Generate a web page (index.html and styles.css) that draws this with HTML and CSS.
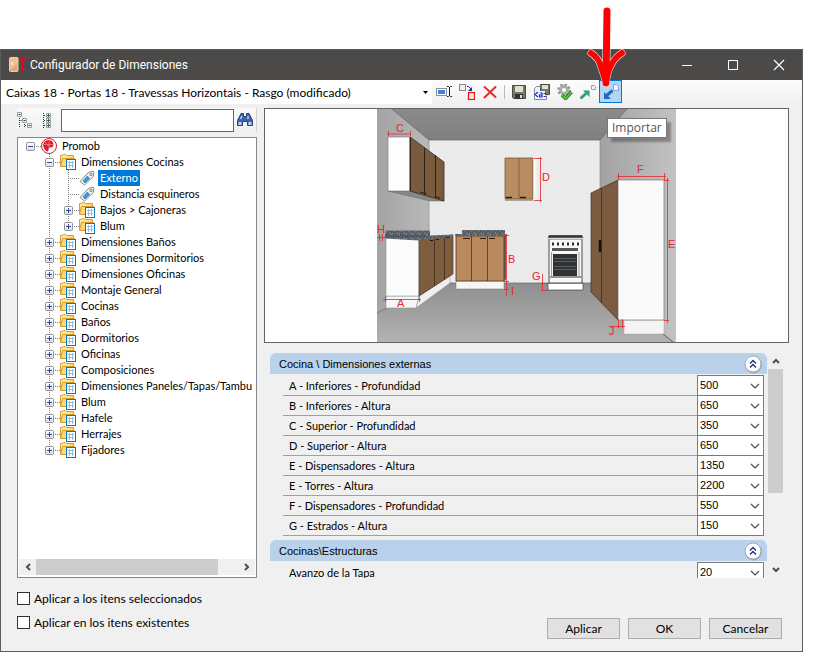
FILE: index.html
```html
<!DOCTYPE html>
<html lang="es">
<head>
  <meta charset="UTF-8" />
  <meta name="viewport" content="width=device-width, initial-scale=1.0" />
  <title>Configurador de Dimensiones</title>
  <link rel="stylesheet" href="styles.css">
</head>
<body>
  <!-- shared icons -->
  <svg class="sprite" aria-hidden="true">
    <defs>
      <linearGradient id="box" x1="0" y1="0" x2="0" y2="1"><stop offset="0" stop-color="#fff"/><stop offset="1" stop-color="#dedede"/></linearGradient>
      <linearGradient id="folder" x1="0" y1="0" x2="1" y2="1"><stop offset="0" stop-color="#fff0b0"/><stop offset="1" stop-color="#f3c652"/></linearGradient>
    </defs>
    <symbol id="plus" viewBox="0 0 9 9">
      <rect x=".5" y=".5" width="8" height="8" rx="1" fill="url(#box)" stroke="#919191"/>
      <path d="M2 4.500h5M4.500 2v5" stroke="#2b4a9b"/>
    </symbol>
    <symbol id="minus" viewBox="0 0 9 9">
      <rect x=".5" y=".5" width="8" height="8" rx="1" fill="url(#box)" stroke="#919191"/>
      <path d="M2 4.500h5" stroke="#2b4a9b"/>
    </symbol>
    <symbol id="carpeta" viewBox="0 0 16 16">
      <path d="M.5 12.500V1.500L5.500.5l1 1h7v3" fill="url(#folder)" stroke="#d99a34"/>
      <path d="M.5 12.500 2.500 4.500h12v8z" fill="#f9d978" stroke="#d99a34"/>
      <rect x="6.500" y="5.500" width="9" height="10" fill="#fff" stroke="#0b78b8"/>
      <path d="M8 8.500h6M8 11.500h6M9.500 8v6M12.500 8v6" stroke="#8fc0e2"/>
      <path d="M9 7.500h1M12 7.500h1" stroke="#f0b83c"/>
    </symbol>
    <symbol id="etiqueta" viewBox="0 0 16 16">
      <path d="M1 11.500 9.500 2.300 14.200 1l1 1-1 4.700L5.500 15z" fill="#f4f4f4" stroke="#8a8a8a"/>
      <path d="M4 10.800 8.300 6l2.400 2.400L6 13z" fill="#2f9cdc" stroke="#1a6fab" stroke-width=".6"/>
      <circle cx="12" cy="4.300" r="1.300" fill="#fff" stroke="#7b7b7b"/>
    </symbol>
    <symbol id="flecha" viewBox="0 0 10 6"><path d="m1 1 4 4 4-4" fill="none" stroke="#4c4c4c" stroke-width="1.200"/></symbol>
    <symbol id="punta" viewBox="0 0 8 6"><path d="m1 5 3-3 3 3" fill="none" stroke="#505050" stroke-width="2"/></symbol>
    <symbol id="plegar" viewBox="0 0 20 20">
      <circle cx="10.500" cy="11" r="8.500" fill="#8796ab" opacity=".6"/>
      <circle cx="10" cy="10" r="8" fill="#fff" stroke="#a0a8b5"/>
      <path d="m7 9.500 3-3 3 3M7 13.500l3-3 3 3" fill="none" stroke="#26377c" stroke-width="1.500"/>
    </symbol>
  </svg>

  <main class="window">
    <header class="titlebar">
      <svg class="app-icon" viewBox="0 0 16 16">
        <rect x=".5" y=".5" width="8.500" height="14" rx="1" fill="#dba97a" stroke="#f0cfa8"/>
        <path d="M1 1h8v5L1 13z" fill="#f1cca4" opacity=".7"/>
        <path d="M3 5v3" stroke="#fff"/>
        <path d="M13.500 2v12M11 1.500h5M11 14.500h5" stroke="#f00018"/>
        <path d="m13.500 2-2 3h4zM13.500 14l-2-3h4z" fill="#f00018"/>
      </svg>
      <h1>Configurador de Dimensiones</h1>
      <button class="caption" aria-label="Minimizar"><svg viewBox="0 0 12 12"><path d="M1 6.500h10" stroke="#fff"/></svg></button>
      <button class="caption" aria-label="Maximizar"><svg viewBox="0 0 12 12"><rect x="1.500" y="1.500" width="9" height="9" fill="none" stroke="#fff"/></svg></button>
      <button class="caption" aria-label="Cerrar"><svg viewBox="0 0 12 12"><path d="m1 1 10 10M11 1 1 11" stroke="#fff" stroke-width="1.200"/></svg></button>
    </header>

    <div class="toolbar">
      <span class="combo">
        <select aria-label="Configuración">
          <option>Caixas 18 - Portas 18 - Travessas Horizontais - Rasgo (modificado)</option>
        </select>
        <svg viewBox="0 0 5 3"><path d="M0 0h5L2.500 3z"/></svg>
      </span>
      <button class="tool" aria-label="Renombrar"><svg viewBox="0 0 16 16">
        <rect x=".5" y="4.500" width="10" height="7" fill="#fff" stroke="#8a8f9c"/><rect x="2" y="6" width="7" height="4" fill="#3f80e0"/>
        <path d="M11 2.500h1.500l1 1 1-1H16M13.500 3v9M11 12.500h1.500l1-1 1 1H16" fill="none" stroke="#222"/></svg></button>
      <button class="tool" aria-label="Duplicar"><svg viewBox="0 0 16 16">
        <rect x=".5" y=".5" width="6" height="6" fill="#f4efef" stroke="#8c8484"/>
        <rect x="9.500" y="8.500" width="6" height="7" fill="#f6e8e8" stroke="#e81010" stroke-width="1.200"/>
        <path d="M8 2.500h1.500L12 5" fill="none" stroke="#143a9c"/><path d="M13 3v4H9z" fill="#143a9c"/></svg></button>
      <button class="tool" aria-label="Eliminar"><svg viewBox="0 0 16 16"><path d="M2.500 3 13.500 13M13.500 3 2.500 13.500" stroke="#f02828" stroke-width="2" stroke-linecap="round"/></svg></button>
      <span class="sep"></span>
      <button class="tool" aria-label="Guardar"><svg viewBox="0 0 16 16">
        <path d="M1.500 1.500h13v13h-12l-1-1z" fill="#77776a" stroke="#4a4a40"/><rect x="4" y="2" width="8" height="6" fill="#dce2d2"/>
        <rect x="4" y="10" width="8" height="5" fill="#333"/><rect x="9" y="11" width="2" height="3" fill="#ddd"/></svg></button>
      <button class="tool" aria-label="Guardar como"><svg viewBox="0 0 16 16">
        <path d="M6.500.5h9v10h-9z" fill="#77776a" stroke="#4a4a40"/><rect x="8" y="1" width="6" height="4" fill="#dce2d2"/>
        <path d="M.5 15.500v-11l2-2h4M.5 15.500h12v-4" fill="#eef1fa" stroke="#7d8796"/>
        <path d="M1 7h10v7H1z" fill="#f4f6ff"/><path d="m4 8-3 2.500L4 13M6 9h2v4H5.500v-2H8M9.500 9.500H12M9.500 12.500H12" fill="none" stroke="#1630e0" stroke-width="1.200"/></svg></button>
      <button class="tool" aria-label="Validar"><svg viewBox="0 0 16 16">
        <circle cx="7" cy="6" r="5.500" fill="none" stroke="#8b8b8b" stroke-width="2.400" stroke-dasharray="2.300 2"/>
        <circle cx="7" cy="6" r="3.500" fill="none" stroke="#ababab" stroke-width="3"/><circle cx="7" cy="6" r="1.500" fill="#fff"/>
        <path d="m5 11 3.500 3.500L14.500 8" fill="none" stroke="#176f16" stroke-width="3.400"/><path d="m5 11 3.500 3.500L14.500 8" fill="none" stroke="#59d03a" stroke-width="1.800"/></svg></button>
      <button class="tool" aria-label="Exportar"><svg viewBox="0 0 16 16">
        <path d="M.5 14.500 6 9.500" stroke="#2c9f78" stroke-width="3"/><path d="M3 6.500h6.500V13z" fill="#2c9f78"/>
        <path d="M11.500 1.500h3l1 1v3h-4z" fill="#edf4ff" stroke="#7ba7dc"/></svg></button>
      <button class="tool active" aria-label="Importar" aria-describedby="tip"><svg viewBox="0 0 16 16">
        <path d="m3 12 6.500-5.500" stroke="#2268c4" stroke-width="3"/><path d="M1 8v7h7z" fill="#2268c4"/>
        <path d="M10.500.5h3l2 2v4h-5z" fill="#edf4ff" stroke="#7ba7dc"/></svg>
        <span class="tooltip" id="tip" role="tooltip">Importar</span></button>
    </div>

    <div class="content">
      <section class="left">
        <div class="search">
          <button class="tool" aria-label="Contraer todo"><svg viewBox="0 0 16 16">
            <path d="M2.500 4v11M2.500 8.500H6M7.500 10v5M8 13.500h4" fill="none" stroke="#333" stroke-dasharray="1 1"/>
            <path d="M.5.500h4v4h-4zM5.500 6.500h4v4h-4zM10.500 11.500h4v4h-4z" fill="#f5f8f8" stroke="#91a5a5"/><path d="M1.500 2.500h2M6.500 8.500h2M11.500 13.500h2" stroke="#333"/></svg></button>
          <button class="tool" aria-label="Expandir todo"><svg viewBox="0 0 16 16">
            <path d="M4.500 1v15M5 3.500h3M5 8.500h3M5 13.500h3" stroke="#333" stroke-dasharray="1 1"/>
            <path d="M7.500 1.500h4v4h-4zM7.500 6.500h4v4h-4zM7.500 11.500h4v4h-4z" fill="#f5f8f8" stroke="#91a5a5"/>
            <path d="M8 3.500h3M8 8.500h3M8 13.500h3M9.500 2v3M9.500 7v3M9.500 12v3" stroke="#555"/></svg></button>
          <input type="text" aria-label="Buscar">
          <button class="tool" aria-label="Buscar"><svg viewBox="0 0 16 16">
            <path d="M4 1.500h2.500v3h3v-3H12l3.500 7v5h-5v-4h-5v4h-5v-5z" fill="#3c64aa" stroke="#24427f"/>
            <path d="M3.500 7 5 4M11 7V4" stroke="#b9d0f5" stroke-width="1.500"/><path d="M1.500 10h3v3h-3zM11.500 10h3v3h-3z" fill="#c4d6f3"/></svg></button>
        </div>

        <div class="tree">
          <ul class="root">
            <li>
              <div class="row"><button class="toggle" aria-label="Contraer"><svg><use href="#minus"/></svg></button>
                <svg class="icon" viewBox="0 0 16 16"><circle cx="8" cy="8" r="7.500" fill="#fff" stroke="#d4202c"/><path d="M8 2C3 2 1.500 6 2.500 9c1 3 3 4.500 4.500 4.500L8 10l3.500-1C14 6 11.500 2 8 2z" fill="#d91f2d"/><path d="M8 2.500v7M3 6.500h9M4 4l5 6" stroke="#f6b0b5" stroke-width=".5"/></svg>
                <span>Promob</span></div>
              <ul>
                <li>
                  <div class="row"><button class="toggle" aria-label="Contraer"><svg><use href="#minus"/></svg></button><svg class="icon"><use href="#carpeta"/></svg><span>Dimensiones Cocinas</span></div>
                  <ul>
                    <li><div class="row"><i class="toggle"></i><svg class="icon"><use href="#etiqueta"/></svg><span class="selected">Externo</span></div></li>
                    <li><div class="row"><i class="toggle"></i><svg class="icon"><use href="#etiqueta"/></svg><span>Distancia esquineros</span></div></li>
                    <li><div class="row"><button class="toggle" aria-label="Expandir"><svg><use href="#plus"/></svg></button><svg class="icon"><use href="#carpeta"/></svg><span>Bajos &gt; Cajoneras</span></div></li>
                    <li><div class="row"><button class="toggle" aria-label="Expandir"><svg><use href="#plus"/></svg></button><svg class="icon"><use href="#carpeta"/></svg><span>Blum</span></div></li>
                  </ul>
                </li>
                <li><div class="row"><button class="toggle" aria-label="Expandir"><svg><use href="#plus"/></svg></button><svg class="icon"><use href="#carpeta"/></svg><span>Dimensiones Baños</span></div></li>
                <li><div class="row"><button class="toggle" aria-label="Expandir"><svg><use href="#plus"/></svg></button><svg class="icon"><use href="#carpeta"/></svg><span>Dimensiones Dormitorios</span></div></li>
                <li><div class="row"><button class="toggle" aria-label="Expandir"><svg><use href="#plus"/></svg></button><svg class="icon"><use href="#carpeta"/></svg><span>Dimensiones Oficinas</span></div></li>
                <li><div class="row"><button class="toggle" aria-label="Expandir"><svg><use href="#plus"/></svg></button><svg class="icon"><use href="#carpeta"/></svg><span>Montaje General</span></div></li>
                <li><div class="row"><button class="toggle" aria-label="Expandir"><svg><use href="#plus"/></svg></button><svg class="icon"><use href="#carpeta"/></svg><span>Cocinas</span></div></li>
                <li><div class="row"><button class="toggle" aria-label="Expandir"><svg><use href="#plus"/></svg></button><svg class="icon"><use href="#carpeta"/></svg><span>Baños</span></div></li>
                <li><div class="row"><button class="toggle" aria-label="Expandir"><svg><use href="#plus"/></svg></button><svg class="icon"><use href="#carpeta"/></svg><span>Dormitorios</span></div></li>
                <li><div class="row"><button class="toggle" aria-label="Expandir"><svg><use href="#plus"/></svg></button><svg class="icon"><use href="#carpeta"/></svg><span>Oficinas</span></div></li>
                <li><div class="row"><button class="toggle" aria-label="Expandir"><svg><use href="#plus"/></svg></button><svg class="icon"><use href="#carpeta"/></svg><span>Composiciones</span></div></li>
                <li><div class="row"><button class="toggle" aria-label="Expandir"><svg><use href="#plus"/></svg></button><svg class="icon"><use href="#carpeta"/></svg><span>Dimensiones Paneles/Tapas/Tambu</span></div></li>
                <li><div class="row"><button class="toggle" aria-label="Expandir"><svg><use href="#plus"/></svg></button><svg class="icon"><use href="#carpeta"/></svg><span>Blum</span></div></li>
                <li><div class="row"><button class="toggle" aria-label="Expandir"><svg><use href="#plus"/></svg></button><svg class="icon"><use href="#carpeta"/></svg><span>Hafele</span></div></li>
                <li><div class="row"><button class="toggle" aria-label="Expandir"><svg><use href="#plus"/></svg></button><svg class="icon"><use href="#carpeta"/></svg><span>Herrajes</span></div></li>
                <li><div class="row"><button class="toggle" aria-label="Expandir"><svg><use href="#plus"/></svg></button><svg class="icon"><use href="#carpeta"/></svg><span>Fijadores</span></div></li>
              </ul>
            </li>
          </ul>
          <div class="hscroll">
            <button aria-label="Izquierda"><svg class="to-left"><use href="#punta"/></svg></button>
            <div class="track"><div class="thumb"></div></div>
            <button aria-label="Derecha"><svg class="to-right"><use href="#punta"/></svg></button>
          </div>
        </div>
      </section>

      <section class="right">
        <div class="preview">
          <svg class="scene" viewBox="0 0 299 233" role="img" aria-label="Cocina con cotas">
            <defs>
              <linearGradient id="wl"><stop offset="0" stop-color="#a3a3a3"/><stop offset="1" stop-color="#b9b9b9"/></linearGradient>
              <linearGradient id="wr"><stop offset="0" stop-color="#a2a2a2"/><stop offset="1" stop-color="#c2c2c2"/></linearGradient>
              <linearGradient id="fl" x2="0" y2="1"><stop offset="0" stop-color="#8f8f8f"/><stop offset="1" stop-color="#b2b2b2"/></linearGradient>
              <linearGradient id="ce" x2="0" y2="1"><stop offset="0" stop-color="#8b8b8b"/><stop offset="1" stop-color="#7c7c7c"/></linearGradient>
              <pattern id="gr" width="7" height="5" patternUnits="userSpaceOnUse"><rect width="7" height="5" fill="#59616a"/><path d="M0 1h2M3 2h2M5 4h2M1 4h1" stroke="#8d949b"/><path d="M2 1h2M0 3h2M4 3h2" stroke="#454c54"/></pattern>
            </defs>
            <!-- room -->
            <path d="M0 0h299v40H0z" fill="url(#ce)"/>
            <path d="M0 0h15l37 31v144L0 204z" fill="url(#wl)"/>
            <path d="M52 31h171v144H52z" fill="#ebebeb"/>
            <path d="M223 31 250 0h49v233h-3l-73-59z" fill="url(#wr)"/>
            <path d="M0 204 52 174h171l73 59H0z" fill="url(#fl)"/>
            <path d="m15 0 37 31h171l27-31M0 204l10-5M52 174h171l73 59" fill="none" stroke="#666" stroke-width=".7"/>
            <path d="M52 31v90M223 31v144" stroke="#8e8e8e" stroke-width=".7"/>
            <!-- wall unit, left -->
            <path d="M11 82h22l34 10H53z" fill="#858886" stroke="#666" stroke-width=".5"/>
            <path d="M11 28h22v54H11z" fill="#fdfdfd" stroke="#777" stroke-width=".6"/>
            <path d="m33 28 34 25v39L33 82z" fill="#795b3e" stroke="#3a2a1b" stroke-width=".8"/>
            <path d="M33.500 28v54M47.500 39v47M58.500 46v43" stroke="#2e231a"/>
            <path d="m43 83 7 2M59 88l4 1" stroke="#222" stroke-width="1.200"/>
            <!-- wall unit, centre -->
            <path d="M128 49h28v41h-28z" fill="#b98c62" stroke="#6b4a2c" stroke-width=".7"/>
            <path d="M142 49v41" stroke="#7e6148"/>
            <path d="M156.500 49h3v42h-3z" fill="#f6f6f6"/>
            <path d="M128 91h28" stroke="#8c8c8c" stroke-width="1.500"/>
            <path d="M129 88.500h6M143 88.500h6" stroke="#2c1c12" stroke-width="1.500"/>
            <!-- base unit, left -->
            <path d="M42 187 73 167v7l-34 25z" fill="#f0efee" stroke="#888" stroke-width=".5"/>
            <path d="M9 187h33l-3 12H9z" fill="#f7f5f5" stroke="#888" stroke-width=".5"/>
            <path d="M9 129h33v58H9z" fill="#fcfbfb" stroke="#888" stroke-width=".5"/>
            <path d="m42 130 34-4v39l-34 22z" fill="#7e5d3e" stroke="#402c1b" stroke-width=".6"/>
            <path d="M57.500 129v48M67.500 128v43" stroke="#3a281a" stroke-width=".8"/>
            <path d="M53 131.500h3M59 130.500h3M69 128.500h3" stroke="#1d1510"/>
            <path d="M9 121.500h44v5l23-1v2l-34 4-34-2v-3z" fill="url(#gr)"/>
            <path d="M8 127h40" stroke="#2f353b" stroke-width=".5"/>
            <!-- base unit, centre -->
            <path d="M127 127h2v43l-2 3z" fill="#5c6268"/>
            <path d="M79 172h48v8H79z" fill="#f6f6f6" stroke="#777" stroke-width=".5"/>
            <path d="M79 127h48v45H79z" fill="#b98a5f" stroke="#4e3520" stroke-width=".8"/>
            <path d="M94.500 127v45M110.500 127v45" stroke="#4a3524" stroke-width=".8"/>
            <path d="M86 129.500h7M103 129.500h6M112 129.500h6" stroke="#2c1c12"/>
            <path d="M85 121h43v4h1v2H78v-2h7z" fill="url(#gr)"/>
            <!-- stove -->
            <path d="M171 174h35v7h-35z" fill="#fff" stroke="#444" stroke-width=".7"/>
            <path d="M172 130h33v44h-33z" fill="#f7f7f7" stroke="#222" stroke-width=".8"/>
            <path d="M172 126.500h33l1 3h-35z" fill="#333" stroke="#111" stroke-width=".5"/>
            <path d="M171 129.500h35" stroke="#ddd" stroke-width="1.500"/>
            <path d="M175 135h28" stroke="#2c2c2c" stroke-width="3" stroke-dasharray="2 3"/>
            <path d="M175 139h26v3h-26z" fill="#555"/><path d="M174.500 143v24M202 143v24" stroke="#999"/>
            <path d="M176 145h24v22h-24z" fill="#2f3133"/>
            <path d="M177 149.500h22M177 152.500h22M177 157.500h22M177 160.500h22" stroke="#6c7074" stroke-width=".7"/>
            <path d="M173 168h31" stroke="#333"/>
            <!-- tower -->
            <path d="M247 211h40v14h-40z" fill="#f5f3f3" stroke="#aaa" stroke-width=".5"/>
            <path d="m214 84 27-13v140l-27-28z" fill="#7b5c40" stroke="#433122" stroke-width=".7"/>
            <path d="M224.500 79v115" stroke="#3b2b1e" stroke-width=".8"/>
            <path d="M223 131v12" stroke="#15100c" stroke-width="2.500"/>
            <path d="M241 71h46v140h-46z" fill="#fbfafa" stroke="#777" stroke-width=".7"/>
            <path d="m286 225 10 8" stroke="#555" stroke-width=".6"/>
            <!-- dimension lines -->
            <path class="dim" d="M10 25h24M11.500 22v5M33.500 22v5M157 49.500h8M157 91.500h8M163.500 48v45M6 190.500h38M8.500 187v6M42.500 187v6M0 128.500h8M2.500 125v7M5.500 125v7M127 126.500h5M127 172.500h5M127 180.500h5M129.500 125v62M165.500 165v17M164 174.500h7M164 181.500h7M240 67.500h49M241.500 64v7M287.500 64v7M290.500 69v145M287 71.500h5M287 211.500h5M241.500 210v9M245.500 210v9M232 217.500h16"/>
            <g class="dim-text">
              <text x="19" y="23">C</text><text x="165" y="72">D</text><text x="0" y="124">H</text>
              <text x="20" y="198">A</text><text x="131" y="154">B</text><text x="134" y="186">I</text>
              <text x="155" y="171">G</text><text x="260" y="64">F</text><text x="291" y="139">E</text><text x="232" y="226">J</text>
            </g>
          </svg>
        </div>

        <div class="settings">
          <div class="groups">
            <section class="group">
              <h2>Cocina \ Dimensiones externas<button aria-label="Plegar"><svg><use href="#plegar"/></svg></button></h2>
              <div class="field"><label for="f1">A - Inferiores - Profundidad</label><span class="pick"><select id="f1"><option>500</option></select><svg><use href="#flecha"/></svg></span></div>
              <div class="field"><label for="f2">B - Inferiores - Altura</label><span class="pick"><select id="f2"><option>650</option></select><svg><use href="#flecha"/></svg></span></div>
              <div class="field"><label for="f3">C - Superior - Profundidad</label><span class="pick"><select id="f3"><option>350</option></select><svg><use href="#flecha"/></svg></span></div>
              <div class="field"><label for="f4">D - Superior - Altura</label><span class="pick"><select id="f4"><option>650</option></select><svg><use href="#flecha"/></svg></span></div>
              <div class="field"><label for="f5">E - Dispensadores - Altura</label><span class="pick"><select id="f5"><option>1350</option></select><svg><use href="#flecha"/></svg></span></div>
              <div class="field"><label for="f6">E - Torres - Altura</label><span class="pick"><select id="f6"><option>2200</option></select><svg><use href="#flecha"/></svg></span></div>
              <div class="field"><label for="f7">F - Dispensadores - Profundidad</label><span class="pick"><select id="f7"><option>550</option></select><svg><use href="#flecha"/></svg></span></div>
              <div class="field"><label for="f8">G - Estrados - Altura</label><span class="pick"><select id="f8"><option>150</option></select><svg><use href="#flecha"/></svg></span></div>
            </section>
            <section class="group">
              <h2>Cocinas\Estructuras<button aria-label="Plegar"><svg><use href="#plegar"/></svg></button></h2>
              <div class="field"><label for="f9">Avanzo de la Tapa</label><span class="pick"><select id="f9"><option>20</option></select><svg><use href="#flecha"/></svg></span></div>
            </section>
          </div>
          <div class="vscroll">
            <button aria-label="Subir"><svg><use href="#punta"/></svg></button>
            <div class="track"><div class="thumb"></div></div>
            <button aria-label="Bajar"><svg class="to-down"><use href="#punta"/></svg></button>
          </div>
        </div>
      </section>
    </div>

    <footer class="footer">
      <div class="checks">
        <label><input type="checkbox"> Aplicar a los itens seleccionados</label>
        <label><input type="checkbox"> Aplicar en los itens existentes</label>
      </div>
      <div class="buttons">
        <button>Aplicar</button>
        <button>OK</button>
        <button>Cancelar</button>
      </div>
    </footer>
  </main>

  <!-- pointer to the import button -->
  <svg class="pointer" viewBox="0 0 42 84" aria-hidden="true">
    <path d="M21 6 20 78" fill="none" stroke="#fff" stroke-width="8" stroke-linecap="round"/>
    <path d="M5 48q8 5 10 14l5 15q3-21 16-29" fill="none" stroke="#fff" stroke-width="7" stroke-linecap="round" stroke-linejoin="round"/>
    <path d="M21 6 20 78" stroke="#f00" stroke-width="7" stroke-linecap="round"/>
    <path d="M5 48q8 5 10 14l5 15q3-21 16-29" fill="none" stroke="#f00" stroke-width="6" stroke-linecap="round" stroke-linejoin="round"/>
    <path d="m13 58 7 20 8-20z" fill="#f00"/>
  </svg>
</body>
</html>
```

FILE: styles.css
```css
* {
  box-sizing: border-box;
}
body {
  margin: 0;
  background: #fff;
  color: #000;
  font-family: "Liberation Sans", Arial, sans-serif;
  font-size: 11px;
}
button, input, select {
  font: inherit;
  color: inherit;
  margin: 0;
  padding: 0;
  border: none;
  border-radius: 0;
  background: none;
}
svg {
  display: block;
}
.sprite {
  position: absolute;
  width: 0;
  height: 0;
}
.window {
  display: flex;
  flex-direction: column;
  height: calc(100vh - 54px);
  min-height: 480px;
  margin: 49px 12px 5px 0;
  border: 1px solid #5c5c5a;
  background: #f0f0f0;
}

/* title bar */
.titlebar {
  display: flex;
  align-items: center;
  height: 30px;
  padding-left: 8px;
  background: #4c4a48;
  color: #fff;
}
.app-icon {
  width: 16px;
  height: 16px;
}
.titlebar h1 {
  flex: 1;
  margin: 0 0 0 5px;
  font: 12px Roboto, sans-serif;
}
.caption {
  display: grid;
  place-items: center;
  width: 46px;
  height: 30px;
}
.caption svg {
  width: 12px;
  height: 12px;
}

/* toolbar */
.toolbar {
  display: flex;
  height: 24px;
  background: linear-gradient(#fdfdfd, #f0f0f0);
}
.combo {
  display: grid;
  align-items: center;
  width: 431px;
  background: #fff;
}
.combo select, .combo svg {
  grid-area: 1 / 1;
}
.combo select {
  appearance: none;
  height: 24px;
  padding-left: 5px;
  font: 12px Lato, sans-serif;
}
.combo svg {
  justify-self: end;
  width: 5px;
  height: 3px;
  margin-right: 4px;
  pointer-events: none;
}
.tool {
  display: grid;
  place-items: center;
  position: relative;
  width: 23px;
  height: 23px;
}
.tool svg {
  width: 16px;
  height: 16px;
}
.sep {
  width: 1px;
  height: 14px;
  margin: 5px 2px 0 3px;
  background: #bdbdbd;
}
.tool.active {
  border: 1px solid #0078d7;
  background: #b3d7f3;
}
.tooltip {
  position: absolute;
  top: 37px;
  left: 7px;
  z-index: 2;
  height: 20px;
  padding: 0 4px;
  border: 1px solid #767676;
  background: #fff;
  box-shadow: 4px 4px 2px rgba(0, 0, 0, 0.3);
  color: #575757;
  font: 12px/18px "Open Sans", "Noto Sans", sans-serif;
}

/* main area */
.content {
  display: grid;
  grid-template-columns: 240px 1fr;
  grid-template-rows: minmax(0, 1fr);
  gap: 7px;
  flex: 1;
  min-height: 0;
  padding: 4px 13px 0 16px;
}
.left, .right {
  display: flex;
  flex-direction: column;
  min-width: 0;
  min-height: 0;
}
.search {
  display: flex;
  height: 24px;
  margin-bottom: 5px;
  border-right: 1px solid #d0d0d0;
  background: linear-gradient(#fafafa, #f0f0f0);
}
.search .tool {
  width: 22px;
}
.search .tool:first-child {
  width: 16px;
  margin-right: 3px;
}
.search input {
  flex: 1;
  min-width: 0;
  height: 23px;
  margin: 1px 0 0 3px;
  padding: 0 4px;
  border: 1px solid #646464;
  background: #fff;
}

/* tree */
.tree {
  display: flex;
  flex-direction: column;
  flex: 1;
  min-height: 0;
  padding: 0 1px 2px;
  border: 1px solid #828790;
  background: #fff;
  font-family: Lato, sans-serif;
}
.tree ul {
  margin: 0;
  padding: 0 0 0 19px;
  list-style: none;
}
.tree .root {
  flex: 1;
  overflow: hidden;
  padding-left: 7px;
}
.tree li {
  background: repeating-linear-gradient(#808080 0 1px, transparent 1px 2px) 4px 0 / 1px 100% no-repeat;
}
.tree li:last-child {
  background-size: 1px 8px;
}
.tree .root > li {
  background: none;
}
.row {
  display: flex;
  align-items: center;
  height: 16px;
  background: repeating-linear-gradient(90deg, #808080 0 1px, transparent 1px 2px) 4px 8px / 11px 1px no-repeat;
  white-space: nowrap;
}
.toggle, .toggle svg {
  flex: none;
  width: 9px;
  height: 9px;
}
.icon {
  flex: none;
  width: 16px;
  height: 16px;
  margin: 0 3px 0 6px;
}
.row span {
  padding: 0 2px;
  line-height: 16px;
}
.row .selected {
  background: #0078d7;
  color: #fff;
}

/* scroll bars */
.hscroll {
  display: flex;
  height: 16px;
  background: #f0f0f0;
}
.hscroll button, .vscroll button {
  display: grid;
  place-items: center;
  flex: none;
  width: 17px;
  height: 16px;
}
.hscroll button svg, .vscroll button svg {
  width: 8px;
  height: 6px;
}
.to-left {
  transform: rotate(-90deg);
}
.to-right {
  transform: rotate(90deg);
}
.to-down {
  transform: rotate(180deg);
}
.track {
  flex: 1;
}
.thumb {
  background: #cdcdcd;
}
.hscroll .thumb {
  width: 90%;
  height: 16px;
}
.vscroll {
  display: flex;
  flex-direction: column;
  width: 15px;
}
.vscroll button {
  width: 15px;
}
.vscroll .thumb {
  height: 64%;
}

/* preview */
.preview {
  flex: none;
  border: 1px solid #646464;
  background: #fff;
}
.scene {
  width: 299px;
  height: 233px;
  margin: 0 auto;
}
.dim {
  fill: none;
  stroke: #e8262c;
  stroke-width: 0.8;
}
.dim-text {
  fill: #e8262c;
  font-size: 11px;
}

/* settings */
.settings {
  display: flex;
  gap: 1px;
  flex: 1;
  min-height: 0;
  margin-top: 10px;
  padding: 0 6px;
}
.groups {
  flex: 1;
  overflow: hidden;
}
.group {
  margin-bottom: 5px;
}
.group h2 {
  display: flex;
  align-items: center;
  justify-content: space-between;
  height: 21px;
  margin: 0 0 1px;
  padding: 0 4px 0 9px;
  border-radius: 6px 6px 0 0;
  background: #b9d1ea;
  font-size: 11px;
  font-weight: normal;
}
.group h2 svg {
  width: 20px;
  height: 20px;
}
.field {
  display: flex;
  height: 20px;
  margin: 0 3px 0 13px;
}
.field label {
  flex: 1;
  height: 21px;
  padding-left: 6px;
  border-bottom: 1px solid #a0a0a0;
  font-family: Lato, sans-serif;
  line-height: 22px;
}
.pick {
  display: grid;
  align-items: center;
  width: 67px;
  height: 21px;
  border: 1px solid #7a7a7a;
  background: #fff;
}
.pick select, .pick svg {
  grid-area: 1 / 1;
}
.pick select {
  appearance: none;
  height: 19px;
  padding: 0 0 2px 2px;
}
.pick svg {
  justify-self: end;
  width: 10px;
  height: 6px;
  margin-right: 3px;
  pointer-events: none;
}

/* footer */
.footer {
  display: flex;
  align-items: flex-end;
  justify-content: space-between;
  height: 73px;
  padding: 0 20px 12px 16px;
  font: 12px Lato, sans-serif;
}
.checks {
  display: grid;
  gap: 11px;
  padding-bottom: 10px;
}
.checks label {
  display: flex;
  align-items: center;
  gap: 4px;
  height: 13px;
}
.checks input {
  appearance: none;
  width: 13px;
  height: 13px;
  border: 1px solid #333;
  background: #fff;
}
.buttons {
  display: flex;
  gap: 8px;
}
.buttons button {
  width: 73px;
  height: 21px;
  border: 1px solid #adadad;
  background: #e1e1e1;
}

.pointer {
  position: absolute;
  top: 5px;
  left: 586px;
  z-index: 3;
  width: 42px;
  height: 84px;
}
```
